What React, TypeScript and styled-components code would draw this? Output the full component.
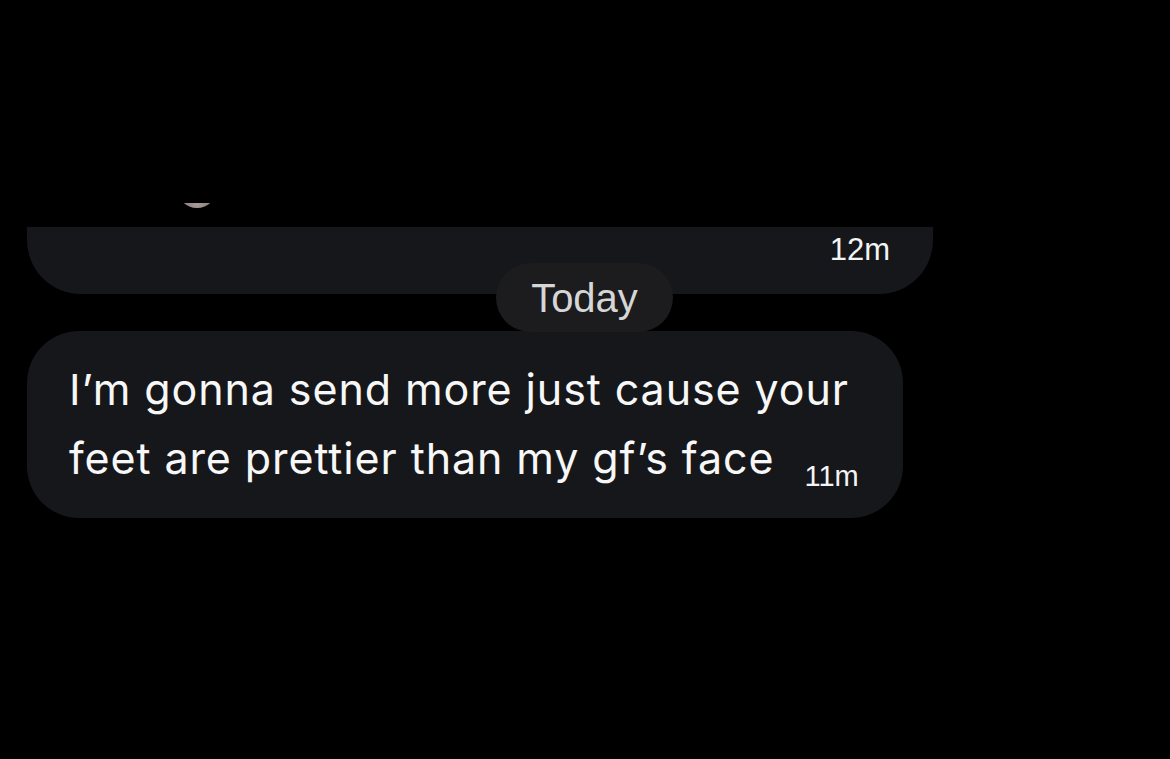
import React from "react";
import styled, { createGlobalStyle } from "styled-components";

const GlobalStyle = createGlobalStyle`
  html, body {
    margin: 0;
    padding: 0;
    background: #000;
  }
`;

const Page = styled.div`
  width: 1170px;
  height: 759px;
  background: #000;
  padding-left: 27px;
  box-sizing: border-box;
  display: flex;
  flex-direction: column;
  overflow: hidden;
`;

const TopSpace = styled.div`
  height: 203px;
  display: flex;
  align-items: flex-end;
`;

const AvatarSliver = styled.div`
  margin-left: 150px;
  width: 40px;
  height: 5px;
  overflow: hidden;
  margin-bottom: -5px;
`;

const AvatarCircle = styled.div`
  width: 40px;
  height: 40px;
  margin-top: -35px;
  border-radius: 50%;
  background: radial-gradient(circle at 50% 90%, #a89b98 0%, #7c7472 45%, #3a3636 100%);
`;

const Spacer = styled.div<{ h: number }>`
  height: ${(p) => p.h}px;
  flex-shrink: 0;
`;

const Bubble = styled.div<{ w: number }>`
  width: ${(p) => p.w}px;
  background: #16171a;
  box-sizing: border-box;
  flex-shrink: 0;
`;

const ClippedBubble = styled(Bubble)`
  height: 67px;
  border-radius: 0 0 54px 54px;
  display: flex;
  justify-content: flex-end;
  padding-right: 43px;
  padding-top: 4px;
`;

const Time = styled.span<{ size: number }>`
  font-family: "Liberation Sans", Arial, sans-serif;
  font-size: ${(p) => p.size}px;
  color: #f4f4f4;
  line-height: 1.2;
  letter-spacing: 0;
`;

const DateRow = styled.div`
  display: flex;
  margin-top: -31px;
  margin-left: 469px;
  position: relative;
  z-index: 1;
`;

const DatePill = styled.div`
  width: 177px;
  height: 69px;
  border-radius: 35px;
  background: #1c1c1f;
  display: flex;
  align-items: center;
  justify-content: center;
  font-family: "Liberation Sans", Arial, sans-serif;
  font-size: 40px;
  color: #d6d6d6;
  padding-top: 2px;
  box-sizing: border-box;
`;

const MessageBubble = styled(Bubble)`
  margin-top: -1px;
  height: 187px;
  border-radius: 52px;
  padding: 24px 0 0 42px;
`;

const MessageText = styled.div`
  font-family: Inter, "Noto Sans", sans-serif;
  font-size: 43px;
  letter-spacing: 0.9px;
  line-height: 69px;
  color: #f7f7f7;
  white-space: nowrap;
`;

const InlineTime = styled(Time)`
  margin-left: 30px;
  vertical-align: -12px;
`;

export default function App() {
  return (
    <>
      <GlobalStyle />
      <Page>
        <TopSpace>
          <AvatarSliver>
            <AvatarCircle />
          </AvatarSliver>
        </TopSpace>
        <Spacer h={24} />
        <ClippedBubble w={906}>
          <Time size={31}>12m</Time>
        </ClippedBubble>
        <DateRow>
          <DatePill>Today</DatePill>
        </DateRow>
        <MessageBubble w={876}>
          <MessageText>
            I’m gonna send more just cause your
            <br />
            feet are prettier than my gf’s face
            <InlineTime size={29}>11m</InlineTime>
          </MessageText>
        </MessageBubble>
      </Page>
    </>
  );
}
